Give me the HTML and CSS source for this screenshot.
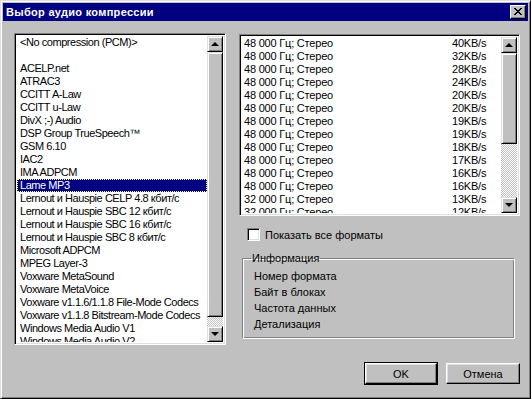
FILE: index.html
```html
<!DOCTYPE html>
<html>
<head>
    <meta charset="utf-8">
    <link rel="stylesheet" href="styles.css">
</head>
<body>
<div class="window">
    <div class="titlebar">
        <span class="title">Выбор аудио компрессии</span>
        <span class="close">
            <svg width="8" height="7" viewBox="0 0 8 7"><path d="M0 0h2v1h-2zM6 0h2v1h-2zM1 1h2v1h-2zM5 1h2v1h-2zM2 2h4v1h-4zM3 3h2v1h-2zM2 4h4v1h-4zM1 5h2v1h-2zM5 5h2v1h-2zM0 6h2v1h-2zM6 6h2v1h-2z" fill="#000"/></svg>
        </span>
    </div>
    <div class="main">
        <div class="listbox codecs">
            <div class="items">
                <div class="item">&lt;No compression (PCM)&gt;</div>
                <div class="item"></div>
                <div class="item">ACELP.net</div>
                <div class="item">ATRAC3</div>
                <div class="item">CCITT A-Law</div>
                <div class="item">CCITT u-Law</div>
                <div class="item">DivX ;-) Audio</div>
                <div class="item">DSP Group TrueSpeech™</div>
                <div class="item">GSM 6.10</div>
                <div class="item">IAC2</div>
                <div class="item">IMA ADPCM</div>
                <div class="item selected">Lame MP3</div>
                <div class="item">Lernout и Hauspie CELP 4.8 кбит/с</div>
                <div class="item">Lernout и Hauspie SBC 12 кбит/с</div>
                <div class="item">Lernout и Hauspie SBC 16 кбит/с</div>
                <div class="item">Lernout и Hauspie SBC 8 кбит/с</div>
                <div class="item">Microsoft ADPCM</div>
                <div class="item">MPEG Layer-3</div>
                <div class="item">Voxware MetaSound</div>
                <div class="item">Voxware MetaVoice</div>
                <div class="item">Voxware v1.1.6/1.1.8 File-Mode Codecs</div>
                <div class="item">Voxware v1.1.8 Bitstream-Mode Codecs</div>
                <div class="item">Windows Media Audio V1</div>
                <div class="item">Windows Media Audio V2</div>
            </div>
            <div class="scrollbar">
                <div class="arrow"><span class="tri up"></span></div>
                <div class="thumb codecs-thumb"></div>
                <div class="track"></div>
                <div class="arrow"><span class="tri down"></span></div>
            </div>
        </div>
        <div class="side">
            <div class="listbox formats">
                <div class="items">
                    <div class="row"><span>48 000 Гц; Стерео</span><span>40KB/s</span></div>
                    <div class="row"><span>48 000 Гц; Стерео</span><span>32KB/s</span></div>
                    <div class="row"><span>48 000 Гц; Стерео</span><span>28KB/s</span></div>
                    <div class="row"><span>48 000 Гц; Стерео</span><span>24KB/s</span></div>
                    <div class="row"><span>48 000 Гц; Стерео</span><span>20KB/s</span></div>
                    <div class="row"><span>48 000 Гц; Стерео</span><span>20KB/s</span></div>
                    <div class="row"><span>48 000 Гц; Стерео</span><span>19KB/s</span></div>
                    <div class="row"><span>48 000 Гц; Стерео</span><span>19KB/s</span></div>
                    <div class="row"><span>48 000 Гц; Стерео</span><span>18KB/s</span></div>
                    <div class="row"><span>48 000 Гц; Стерео</span><span>17KB/s</span></div>
                    <div class="row"><span>48 000 Гц; Стерео</span><span>16KB/s</span></div>
                    <div class="row"><span>48 000 Гц; Стерео</span><span>16KB/s</span></div>
                    <div class="row"><span>32 000 Гц; Стерео</span><span>13KB/s</span></div>
                    <div class="row"><span>32 000 Гц; Стерео</span><span>12KB/s</span></div>
                </div>
                <div class="scrollbar">
                    <div class="arrow"><span class="tri up"></span></div>
                    <div class="thumb formats-thumb"></div>
                    <div class="track"></div>
                    <div class="arrow"><span class="tri down"></span></div>
                </div>
            </div>
            <label class="check"><span class="box"></span>Показать все форматы</label>
            <fieldset class="info">
                <legend>Информация</legend>
                <div>Номер формата</div>
                <div>Байт в блоках</div>
                <div>Частота данных</div>
                <div>Детализация</div>
            </fieldset>
        </div>
    </div>
    <div class="buttons">
        <button class="btn default">OK</button>
        <button class="btn">Отмена</button>
    </div>
</div>
</body>
</html>
```

FILE: styles.css
```css
body{
    margin:0;
    font-family:"Liberation Sans", Arial, sans-serif;
    font-size:11px;
    color:#000;
}
.window{
    width:531px;
    height:399px;
    box-sizing:border-box;
    background:#c0c0c0;
    border:1px solid;
    border-color:#dfdfdf #000 #000 #dfdfdf;
    box-shadow:inset 1px 1px #fff, inset -1px -1px #808080;
    padding:2px;
}
.titlebar{
    height:18px;
    background:#000080;
    display:flex;
    align-items:center;
    justify-content:space-between;
    padding:0 2px 0 3px;
}
.title{
    color:#fff;
    font-weight:bold;
    font-size:11px;
    letter-spacing:0.3px;
}
.close{
    width:16px;
    height:14px;
    box-sizing:border-box;
    background:#c0c0c0;
    border:1px solid;
    border-color:#fff #000 #000 #fff;
    box-shadow:inset -1px -1px #808080;
    display:flex;
    align-items:center;
    justify-content:center;
    padding:0 1px 1px 0;
}
.close svg{
    display:block;
}
.main{
    display:grid;
    grid-template-columns:212px 281px;
    column-gap:13px;
    padding-left:11px;
    margin-top:12px;
}
.listbox{
    display:flex;
    box-sizing:border-box;
    border:1px solid;
    border-color:#808080 #fff #fff #808080;
    box-shadow:inset 1px 1px #000, inset -1px -1px #dfdfdf;
    padding:2px;
    background:#fff;
}
.codecs{
    height:312px;
}
.formats{
    height:182px;
    margin-top:1px;
}
.items{
    flex:1;
    overflow:hidden;
    white-space:nowrap;
}
.item{
    height:13px;
    line-height:13px;
    padding-left:3px;
    letter-spacing:-0.45px;
}
.item.selected{
    background:#000080;
    color:#fff;
    outline:1px dotted #ffff80;
    outline-offset:-1px;
}
.row{
    display:grid;
    grid-template-columns:208px 1fr;
    height:13px;
    line-height:13px;
    padding-left:2px;
    letter-spacing:-0.2px;
}
.scrollbar{
    width:16px;
    display:flex;
    flex-direction:column;
}
.arrow,.thumb{
    box-sizing:border-box;
    background:#c0c0c0;
    border:1px solid;
    border-color:#dfdfdf #000 #000 #dfdfdf;
    box-shadow:inset 1px 1px #fff, inset -1px -1px #808080;
}
.arrow{
    height:16px;
    display:flex;
    align-items:center;
    justify-content:center;
}
.tri{
    width:0;
    height:0;
    border-left:4px solid transparent;
    border-right:4px solid transparent;
}
.tri.up{
    border-bottom:4px solid #000;
    margin-top:-1px;
}
.tri.down{
    border-top:4px solid #000;
}
.codecs-thumb{
    height:265px;
}
.formats-thumb{
    height:91px;
}
.track{
    flex:1;
    background:repeating-conic-gradient(#fff 0 25%, #c0c0c0 0 50%) 0 0/2px 2px;
}
.side{
    display:flex;
    flex-direction:column;
}
.check{
    display:flex;
    align-items:center;
    margin:12px 0 0 8px;
    height:13px;
}
.box{
    width:13px;
    height:13px;
    box-sizing:border-box;
    background:#fff;
    border:1px solid;
    border-color:#808080 #fff #fff #808080;
    box-shadow:inset 1px 1px #000, inset -1px -1px #dfdfdf;
    margin-right:5px;
}
.info{
    margin:11px 5px 0 3px;
    padding:4px 0 0 11px;
    height:87px;
    box-sizing:border-box;
    border:1px solid;
    border-color:#808080 #fff #fff #808080;
    box-shadow:inset 1px 1px #fff, inset -1px -1px #808080;
}
.info legend{
    padding:0 1px;
    margin-left:-3px;
    line-height:12px;
}
.info div{
    height:16px;
    line-height:16px;
}
.buttons{
    display:flex;
    justify-content:flex-end;
    gap:9px;
    padding-right:8px;
    margin-top:18px;
}
.btn{
    font-family:"Liberation Sans", Arial, sans-serif;
    font-size:11px;
    height:21px;
    width:74px;
    background:#c0c0c0;
    border:1px solid;
    border-color:#fff #000 #000 #fff;
    box-shadow:inset -1px -1px #808080, inset 1px 1px #dfdfdf;
    padding:0;
    color:#000;
}
.btn.default{
    width:72px;
    outline:1px solid #000;
}
```
